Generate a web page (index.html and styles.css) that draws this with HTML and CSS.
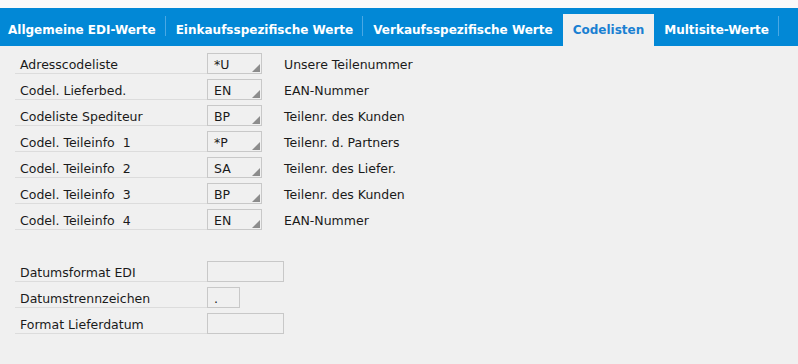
FILE: index.html
```html
<!DOCTYPE html>
<html lang="de">
  <head>
    <meta charset="utf-8">
    <title>Codelisten</title>
    <link rel="stylesheet" href="styles.css">
  </head>
  <body>
    <div class="tabbar">
      <div class="tab">Allgemeine EDI-Werte</div>
      <div class="tab">Einkaufsspezifische Werte</div>
      <div class="tab before-active">Verkaufsspezifische Werte</div>
      <div class="tab active">Codelisten</div>
      <div class="tab">Multisite-Werte</div>
    </div>

    <div class="form">
      <div class="group">
        <div class="row"><div class="label">Adresscodeliste</div><div class="field code">*U</div><div class="desc">Unsere Teilenummer</div></div>
        <div class="row"><div class="label">Codel. Lieferbed.</div><div class="field code">EN</div><div class="desc">EAN-Nummer</div></div>
        <div class="row"><div class="label">Codeliste Spediteur</div><div class="field code">BP</div><div class="desc">Teilenr. des Kunden</div></div>
        <div class="row"><div class="label">Codel. Teileinfo&nbsp; 1</div><div class="field code">*P</div><div class="desc">Teilenr. d. Partners</div></div>
        <div class="row"><div class="label">Codel. Teileinfo&nbsp; 2</div><div class="field code">SA</div><div class="desc">Teilenr. des Liefer.</div></div>
        <div class="row"><div class="label">Codel. Teileinfo&nbsp; 3</div><div class="field code">BP</div><div class="desc">Teilenr. des Kunden</div></div>
        <div class="row"><div class="label">Codel. Teileinfo&nbsp; 4</div><div class="field code">EN</div><div class="desc">EAN-Nummer</div></div>
      </div>

      <div class="group">
        <div class="row"><div class="label">Datumsformat EDI</div><div class="field wide"></div></div>
        <div class="row"><div class="label">Datumstrennzeichen</div><div class="field short">.</div></div>
        <div class="row"><div class="label">Format Lieferdatum</div><div class="field wide"></div></div>
      </div>
    </div>
  </body>
</html>
```

FILE: styles.css
```css
*{
  padding: 0px;
  margin: 0px;
  box-sizing: border-box;
}

:root{
  --blue: #0288d6;
  --activeText: #1a80d2;
  --bg: #f0f0f0;
  --line: #dcdcdc;
  --box: #c8c8c8;
  --text: #1a1a1a;
}

body{
  background-color: var(--bg);
  font-family: "DejaVu Sans", Verdana, sans-serif;
  font-size: 12.5px;
  color: var(--text);
  padding-top: 8px;
  background-image: linear-gradient(#fafafa, #fafafa);
  background-size: 100% 8px;
  background-repeat: no-repeat;
}

.tabbar{
  background-color: var(--blue);
  height: 38px;
  display: flex;
  align-items: flex-end;
}

.tab{
  position: relative;
  height: 32px;
  padding: 0 10px;
  display: flex;
  align-items: center;
  color: white;
  font-weight: bold;
  font-size: 12px;
  white-space: nowrap;
}

.tab:first-child{
  padding-left: 8px;
}

.tab::after{
  content: "";
  position: absolute;
  right: 0;
  top: 2px;
  height: 20px;
  width: 1px;
  background-color: #4aa8e4;
}

.tab.before-active::after,
.tab.active::after{
  display: none;
}

.tab.active{
  background-color: var(--bg);
  color: var(--activeText);
}

.form{
  padding: 7px 0 0 15px;
}

.group{
  padding-bottom: 26px;
}

.row{
  display: flex;
  align-items: flex-start;
  height: 21px;
  margin-bottom: 5px;
}

.label{
  width: 192px;
  height: 21px;
  padding: 3px 0 0 5px;
  line-height: 17px;
  border-bottom: 1px solid var(--line);
}

.field{
  position: relative;
  height: 21px;
  border: 1px solid var(--box);
  padding: 2px 0 0 6px;
  line-height: 17px;
}

.field.code{
  width: 55px;
}

.field.code::after{
  content: "";
  position: absolute;
  right: 1px;
  bottom: 1px;
  width: 0;
  height: 0;
  border-left: 8px solid transparent;
  border-bottom: 8px solid #8c8c8c;
}

.field.wide{
  width: 77px;
}

.field.short{
  width: 33px;
}

.desc{
  margin-left: 22px;
  padding-top: 3px;
  line-height: 17px;
}
```
